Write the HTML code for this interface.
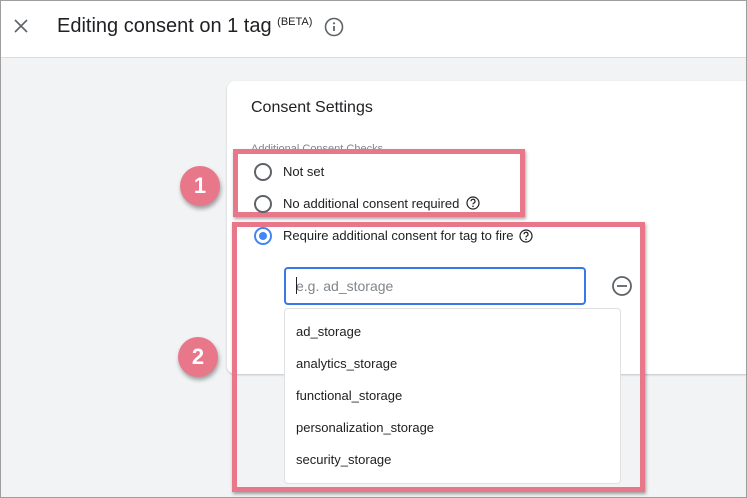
<!DOCTYPE html>
<html><head><style>
*{margin:0;padding:0;box-sizing:border-box}
body{width:747px;height:498px;overflow:hidden;background:#f1f3f4;font-family:"Liberation Sans",Arial,sans-serif;position:relative;color:#202124}
.hdr{position:absolute;left:0;top:0;width:747px;height:58px;background:#fff;border-bottom:1px solid #dadce0}
.frame{position:absolute;left:0;top:0;width:747px;height:498px;border:1px solid #9e9e9e;pointer-events:none;z-index:9}
.card{position:absolute;left:227px;top:81px;width:540px;height:293px;background:#fff;border-radius:8px;box-shadow:0 1px 2px rgba(0,0,0,.2)}
.abs{position:absolute}
.radio{position:absolute;width:18px;height:18px;border:2px solid #5f6368;border-radius:50%}
.lbl{position:absolute;font-size:13px;color:#202124}
.pink{position:absolute;border:5px solid #e8778a;box-shadow:1px 2px 3px rgba(0,0,0,.35)}
.badge{position:absolute;width:40px;height:40px;border-radius:50%;background:#e8778a;color:#fff;font-size:22px;font-weight:bold;text-align:center;line-height:40px;box-shadow:1px 3px 4px rgba(0,0,0,.35)}
.item{position:absolute;left:11px;font-size:13px;color:#202124}
</style></head><body>
<div class="hdr"></div>
<svg class="abs" style="left:14px;top:19px" width="14" height="14" viewBox="0 0 14 14"><path d="M1 1L13 13M13 1L1 13" stroke="#5f6368" stroke-width="1.6"/></svg>
<div class="abs" style="left:57px;top:15px;font-size:20px;color:#202124">Editing consent on 1 tag <span style="font-size:11px;vertical-align:7px">(BETA)</span></div>
<svg class="abs" style="left:324px;top:17px" width="20" height="20" viewBox="0 0 20 20"><circle cx="10" cy="10" r="8.5" fill="none" stroke="#5f6368" stroke-width="1.6"/><path d="M10 9v5" stroke="#5f6368" stroke-width="1.8"/><circle cx="10" cy="6.3" r="1.1" fill="#5f6368"/></svg>
<div class="card"></div>
<div class="abs" style="left:251px;top:99px;font-size:16px">Consent Settings</div>
<div class="abs" style="left:251px;top:143px;font-size:11px;color:#80868b">Additional Consent Checks</div>
<div class="pink" style="left:233px;top:149px;width:292px;height:68px;background:#fff"></div>
<div class="pink" style="left:232px;top:222px;width:413px;height:270px;background:transparent"></div>
<div style="position:absolute;left:237px;top:227px;width:403px;height:146px;background:#fff"></div>
<div class="radio" style="left:254px;top:163px"></div>
<div class="lbl" style="left:283px;top:164px">Not set</div>
<div class="radio" style="left:254px;top:195px"></div>
<div class="lbl" style="left:283px;top:196px">No additional consent required</div>
<svg class="abs" style="left:466px;top:196px" width="14" height="14" viewBox="0 0 14 14"><circle cx="7" cy="7" r="6" fill="none" stroke="#202124" stroke-width="1.2"/><path d="M5 5.3a2 2 0 1 1 2.6 1.9c-.5.2-.6.5-.6 1.2" fill="none" stroke="#202124" stroke-width="1.2"/><circle cx="7" cy="10.3" r=".8" fill="#202124"/></svg>
<div class="radio" style="left:254px;top:227px;border-color:#4285f4"><div style="position:absolute;left:3px;top:3px;width:8px;height:8px;border-radius:50%;background:#4285f4"></div></div>
<div class="lbl" style="left:283px;top:228px">Require additional consent for tag to fire</div>
<svg class="abs" style="left:519px;top:229px" width="14" height="14" viewBox="0 0 14 14"><circle cx="7" cy="7" r="6" fill="none" stroke="#202124" stroke-width="1.2"/><path d="M5 5.3a2 2 0 1 1 2.6 1.9c-.5.2-.6.5-.6 1.2" fill="none" stroke="#202124" stroke-width="1.2"/><circle cx="7" cy="10.3" r=".8" fill="#202124"/></svg>
<div class="abs" style="left:284px;top:267px;width:302px;height:38px;border:2px solid #3b78e7;border-radius:4px;background:#fff"></div>
<div class="abs" style="left:296px;top:278px;font-size:14px;color:#80868b">e.g. ad_storage</div>
<div class="abs" style="left:296px;top:277px;width:1px;height:17px;background:#202124"></div>
<svg class="abs" style="left:611px;top:275px" width="22" height="22" viewBox="0 0 22 22"><circle cx="11" cy="11" r="9" fill="none" stroke="#5f6368" stroke-width="1.8"/><path d="M6 11h10" stroke="#5f6368" stroke-width="1.8"/></svg>
<div class="abs" style="left:284px;top:308px;width:337px;height:176px;background:#fff;border:1px solid #e0e0e0;border-radius:4px">
<div class="item" style="top:15px">ad_storage</div>
<div class="item" style="top:47px">analytics_storage</div>
<div class="item" style="top:79px">functional_storage</div>
<div class="item" style="top:111px">personalization_storage</div>
<div class="item" style="top:143px">security_storage</div>
</div>
<div class="badge" style="left:180px;top:166px">1</div>
<div class="badge" style="left:178px;top:337px">2</div>
<div class="frame"></div>
</body></html>
